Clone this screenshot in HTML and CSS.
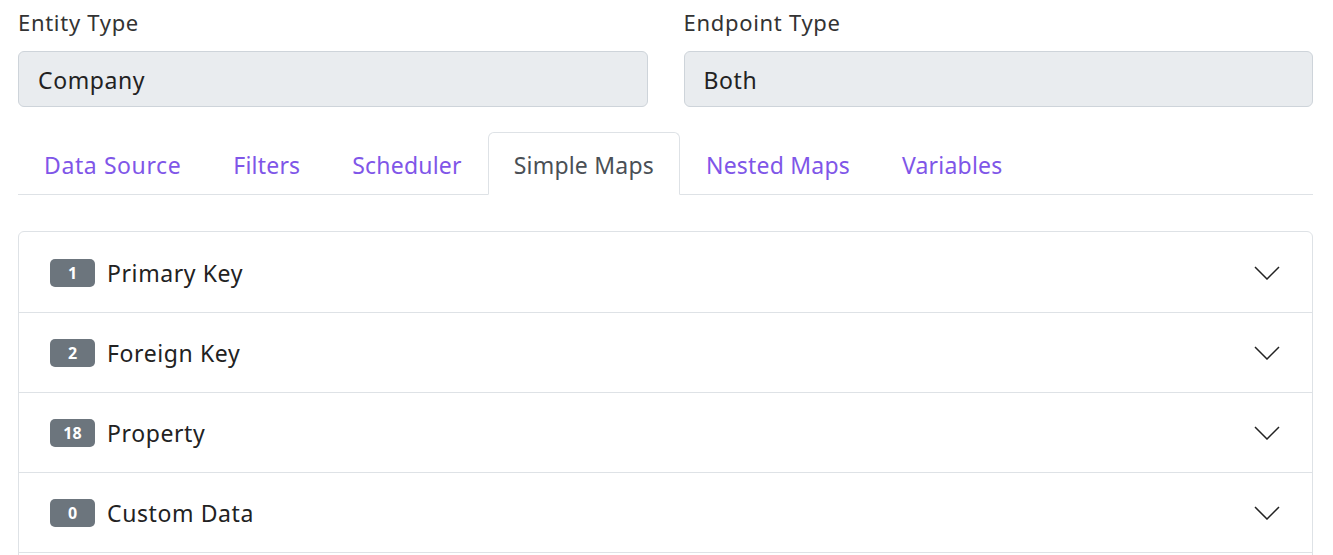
FILE: index.html
```html
<!DOCTYPE html>
<html>
<head>
<meta charset="utf-8">
<link rel="stylesheet" href="styles.css">
</head>
<body>
<div class="page">
  <div class="fields">
    <div class="field">
      <label class="label">Entity Type</label>
      <div class="input">Company</div>
    </div>
    <div class="field">
      <label class="label">Endpoint Type</label>
      <div class="input">Both</div>
    </div>
  </div>
  <ul class="tabs">
    <li class="tab">Data Source</li>
    <li class="tab">Filters</li>
    <li class="tab">Scheduler</li>
    <li class="tab active">Simple Maps</li>
    <li class="tab">Nested Maps</li>
    <li class="tab">Variables</li>
  </ul>
  <div class="accordion">
    <div class="row first"><span class="badge">1</span><span class="title">Primary Key</span><svg class="chev" viewBox="0 0 26 14"><path d="M1 1 L13 13 L25 1"/></svg></div>
    <div class="row"><span class="badge">2</span><span class="title">Foreign Key</span><svg class="chev" viewBox="0 0 26 14"><path d="M1 1 L13 13 L25 1"/></svg></div>
    <div class="row"><span class="badge">18</span><span class="title">Property</span><svg class="chev" viewBox="0 0 26 14"><path d="M1 1 L13 13 L25 1"/></svg></div>
    <div class="row"><span class="badge">0</span><span class="title">Custom Data</span><svg class="chev" viewBox="0 0 26 14"><path d="M1 1 L13 13 L25 1"/></svg></div>
    <div class="row empty"></div>
  </div>
</div>
</body>
</html>
```
FILE: styles.css
```css
* { box-sizing: border-box; }
html, body { margin: 0; padding: 0; background: #fff; }
body {
  font-family: "Noto Sans", "Open Sans", sans-serif;
  color: #2b2b2b;
  overflow: hidden;
  height: 555px;
}
.page { padding: 6px 20px 0 18px; }
.fields { display: flex; gap: 36px; }
.field { flex: 1; display: flex; flex-direction: column; }
.label { font-size: 22px; letter-spacing: 0.7px; line-height: 32px; margin-bottom: 13px; color: #333; }
.input {
  height: 56px;
  background: #e9ecef;
  border: 1px solid #ced4da;
  border-radius: 6px;
  padding: 0 19px;
  font-size: 23px;
  letter-spacing: 0.6px;
  line-height: 56px;
  color: #222;
}
.tabs {
  list-style: none;
  margin: 25px 0 0 0;
  padding: 0;
  display: flex;
  border-bottom: 1px solid #dee2e6;
}
.tab {
  padding: 0 25px;
  height: 63px;
  line-height: 64px;
  font-size: 23px;
  letter-spacing: 0.2px;
  color: #7f56e8;
  border: 1px solid transparent;
  border-top-left-radius: 6px;
  border-top-right-radius: 6px;
  margin-bottom: -1px;
}
.tab:first-child { letter-spacing: 0.6px; }
.tab.active {
  color: #4a4f55;
  background: #fff;
  border-color: #dee2e6 #dee2e6 #fff;
}
.accordion {
  margin-top: 36px;
  border: 1px solid #dee2e6;
  border-radius: 6px 6px 0 0;
}
.row {
  height: 80px;
  display: flex;
  align-items: center;
  padding: 0 32px 0 31px;
  border-bottom: 1px solid #dee2e6;
}
.row.first { height: 81px; padding-top: 1px; }
.badge {
  width: 45px;
  height: 28px;
  border-radius: 5px;
  background: #6c757d;
  color: #fff;
  font-weight: 700;
  font-size: 16px;
  display: flex;
  align-items: center;
  justify-content: center;
  margin-right: 12px;
}
.title { font-size: 23px; letter-spacing: 0.6px; color: #222; flex: 1; }
.chev { width: 26px; height: 14px; fill: none; stroke: #222; stroke-width: 1.5; }
```
